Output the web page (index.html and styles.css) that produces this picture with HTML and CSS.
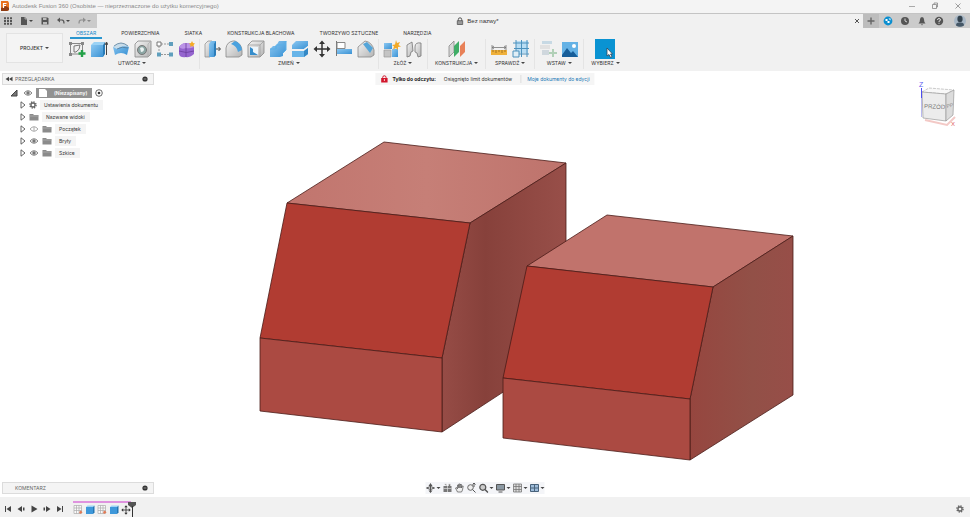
FILE: index.html
```html
<!DOCTYPE html>
<html lang="pl">
<head>
<meta charset="utf-8">
<title>Autodesk Fusion 360</title>
<link rel="stylesheet" href="styles.css">
</head>
<body>
<svg class="defs" aria-hidden="true">
  <defs>
    <linearGradient id="blue" x1="0" y1="0" x2="1" y2="1"><stop offset="0" stop-color="#8cc8f2"/><stop offset="1" stop-color="#3a92d4"/></linearGradient>
    <linearGradient id="gray" x1="0" y1="0" x2="1" y2="1"><stop offset="0" stop-color="#f4f4f4"/><stop offset="1" stop-color="#b4b4b4"/></linearGradient>
  </defs>
  <symbol id="eye" viewBox="0 0 10 8"><path d="M1 4Q5-.6 9 4Q5 8.600 1 4Z" fill="#eee" stroke="#888"/><circle cx="5" cy="4" r="1.700" fill="#777"/></symbol>
  <symbol id="eye-off" viewBox="0 0 10 8"><path d="M1 4Q5-.6 9 4Q5 8.600 1 4Z" fill="none" stroke="#aaa"/><path d="M5 2v4" stroke="#aaa"/></symbol>
  <symbol id="folder" viewBox="0 0 10 8"><path d="M.5 1h3.500l1 1h4.500v5.500h-9Z" fill="#8b8b8b"/><path d="M.5 3h9" stroke="#b5b5b5" stroke-width=".7"/></symbol>
  <symbol id="twisty" viewBox="0 0 6 8"><path d="M1 .8L5 4L1 7.200Z" fill="#fff" stroke="#555" stroke-width=".9"/></symbol>
  <symbol id="gear" viewBox="0 0 10 10"><circle cx="5" cy="5" r="3.800" fill="none" stroke="#666" stroke-width="1.800" stroke-dasharray="1.700 1.280"/><circle cx="5" cy="5" r="2.500" fill="none" stroke="#666" stroke-width="1.600"/></symbol>
  <symbol id="dot" viewBox="0 0 6 6"><circle cx="3" cy="3" r="2.600" fill="#333"/><path d="M1.600 3h2.800" stroke="#ccc" stroke-width=".6"/></symbol>
  <symbol id="tl-sketch" viewBox="0 0 10 10"><path d="M1 .5h7.500v8H1ZM1 3h7.500M1 5.500h7.500M3.500.5v8M6 .5v8" fill="#fafafa" stroke="#aaa" stroke-width=".7"/><path d="M6 7l2-1.500 1.500 2-2.500 1.500Z" fill="#e37a55"/></symbol>
  <symbol id="tl-box" viewBox="0 0 10 10"><path d="M1 2l1.500-1.500h7L8 2Z" fill="#9ed3f6"/><path d="M1 2h7v7H1Z" fill="#3e98da"/><path d="M8 2L9.500.5v7L8 9Z" fill="#2376b3"/></symbol>
  <symbol id="move" viewBox="0 0 18 18"><path d="M9 3v12M3 9h12" stroke="#333" stroke-width="1.500"/><path d="M9 .5l3 3.500H6ZM9 17.500l3-3.500H6ZM.5 9L4 6v6ZM17.500 9L14 6v6Z" fill="#333"/></symbol>
</svg>

<header class="titlebar">
  <svg class="logo" viewBox="0 0 10 12"><path d="M1 1h7l1 2v7l-2 1H1Z" fill="#e8701c"/><path d="M1 8l5-2 3 2v2l-2 1H1Z" fill="#8e3b12"/><path d="M3.500 3v5M3.500 3.500h3M3.500 5.500h2.500" stroke="#fff" stroke-width="1.200"/></svg>
  <h1>Autodesk Fusion 360 (Osobiste — nieprzeznaczone do użytku komercyjnego)</h1>
  <div class="window-controls">
    <button aria-label="Minimalizuj"><svg viewBox="0 0 8 8"><path d="M1 4.500h6" stroke="#888" stroke-width=".7"/></svg></button>
    <button aria-label="Przywróć"><svg viewBox="0 0 8 8"><path d="M1.500 2.500h4v4h-4ZM3 2.500V1h3.500v4h-1" fill="none" stroke="#777" stroke-width=".7"/></svg></button>
    <button aria-label="Zamknij"><svg viewBox="0 0 8 8"><path d="M1.500 1.500l5 5M6.500 1.500l-5 5" stroke="#777" stroke-width=".7"/></svg></button>
  </div>
</header>

<div class="docbar">
  <div class="quick">
    <button aria-label="Panel danych"><svg viewBox="0 0 8 8"><path d="M0 1.200h8M0 4h8M0 6.800h8" stroke="#555" stroke-width="1.900" stroke-dasharray="2 1"/></svg></button>
    <button class="menu" aria-label="Plik"><svg viewBox="0 0 8 8"><path d="M1 0h4l2 2v6H1Z" fill="#555"/><path d="M5 0v2h2" stroke="#ccc" stroke-width=".7" fill="none"/></svg></button>
    <button aria-label="Zapisz"><svg viewBox="0 0 8 8"><path d="M.5.5h6l1 1v6h-7Z" fill="#555"/><path d="M2 1h3.500v2H2ZM2 5h4v2.500H2Z" fill="#bbb"/></svg></button>
    <button class="menu" aria-label="Cofnij"><svg viewBox="0 0 8 8"><path d="M1.500 3H5q2 0 2 3.500" fill="none" stroke="#555" stroke-width="1.200"/><path d="M0 3l3-2.500v5Z" fill="#555"/></svg></button>
    <button class="menu faded" aria-label="Ponów"><svg viewBox="0 0 8 8"><path d="M6.500 3H3Q1 3 1 6.500" fill="none" stroke="#555" stroke-width="1.200"/><path d="M8 3L5 .5v5Z" fill="#555"/></svg></button>
  </div>
  <div class="doc-tab">
    <svg class="lock" viewBox="0 0 8 8"><path d="M2.300 4V2.500Q2.300.8 4 .8T5.700 2.500V4" fill="none" stroke="#555"/><path d="M1.300 3.700h5.400v3.800H1.300Z" fill="#999" stroke="#555" stroke-width=".8"/></svg>
    <span>Bez nazwy*</span>
    <button class="close" aria-label="Zamknij kartę"><svg viewBox="0 0 8 8"><path d="M2 2l4 4M6 2L2 6" stroke="#555"/></svg></button>
  </div>
  <div class="account">
    <button class="new" aria-label="Nowy projekt"><svg viewBox="0 0 10 10"><path d="M5 1.500v7M1.500 5h7" stroke="#666" stroke-width="1.400"/></svg></button>
    <button aria-label="Rozszerzenia"><svg viewBox="0 0 10 10"><circle cx="5" cy="5" r="4.400" fill="#0b8fd0"/><path d="M2.500 3h2v2h2v2h-2V5h-2ZM5.500 2.500h2v2" fill="#fff"/></svg></button>
    <button aria-label="Stan zadań"><svg viewBox="0 0 10 10"><circle cx="5" cy="5" r="4" fill="#555"/><path d="M5 2.500V5l2 1" fill="none" stroke="#d4d4d4"/></svg></button>
    <button aria-label="Powiadomienia"><svg viewBox="0 0 10 10"><path d="M1.500 7.500Q3 6 3 3.500Q3 1 5 1T7 3.500Q7 6 8.500 7.500Z" fill="#555"/><path d="M4 8.300h2L5 9.500Z" fill="#555"/></svg></button>
    <button aria-label="Pomoc"><svg viewBox="0 0 10 10"><circle cx="5" cy="5" r="4.200" fill="#555"/><path d="M3.500 4Q3.500 2.500 5 2.500T6.500 4Q6.500 4.800 5 5.200V6M5 6.800v1" fill="none" stroke="#ddd"/></svg></button>
    <button class="avatar" aria-label="Profil"><svg viewBox="0 0 12 12"><circle cx="6" cy="6" r="6" fill="#a9b8c6"/><ellipse cx="6" cy="4" rx="2.600" ry="3.300" fill="#34434f"/><path d="M2 10.500Q2 7.500 5 7.500h2q3 0 3 3Q6 13 2 10.500Z" fill="#455767"/></svg></button>
  </div>
</div>

<div class="ribbon">
  <button class="project caret">PROJEKT</button>
  <div class="tools">
    <nav class="tabs">
      <button class="active">OBSZAR</button><button>POWIERZCHNIA</button><button>SIATKA</button><button>KONSTRUKCJA BLACHOWA</button><button>TWORZYWO SZTUCZNE</button><button>NARZĘDZIA</button>
    </nav>
    <div class="groups">
      <section class="group">
        <div class="icons">
          <button aria-label="Szkic"><svg viewBox="0 0 18 18"><path d="M2.500 3v11h10M2.500 3.500h12v8" fill="none" stroke="#888"/><path d="M6 12V6l6-1q0 5-4 7Z" fill="none" stroke="#777"/><path d="M1 2h3v3H1ZM13 2h3v3h-3ZM1 13h3v3H1Z" fill="#888"/><path d="M14 10v7M10.500 13.500h7" stroke="#24a148" stroke-width="2.400"/></svg></button>
          <button aria-label="Wyciągnięcie"><svg viewBox="0 0 18 18"><path d="M1 5l3-3h11l-2 3Z" fill="#9bd2f5"/><path d="M1 5h12v12H1Z" fill="url(#blue)"/><path d="M13 5l2-3v12l-2 3Z" fill="#287cb8"/><path d="M16.500 3v12M15 5l1.500-3L18 5" stroke="#444" fill="none"/></svg></button>
          <button aria-label="Obrót"><svg viewBox="0 0 18 18"><path d="M1 7Q9 0 17 7l-2 8q-6-4-12 0Z" fill="url(#blue)"/><path d="M1 7Q9 0 17 7q-8-2-12 2Z" fill="#c8dce9"/><path d="M2 6Q9 0 16 6M5 9q5-3 11-1" fill="none" stroke="#577c98" stroke-width=".8"/></svg></button>
          <button aria-label="Otwór"><svg viewBox="0 0 18 18"><path d="M1 4l3-3h13v13l-3 3H1Z" fill="url(#gray)" stroke="#888" stroke-width=".8"/><path d="M14 17V4l3-3" fill="none" stroke="#aaa" stroke-width=".7"/><circle cx="8" cy="10" r="4.500" fill="#8ca6a4" stroke="#777"/><path d="M6 8q3-2 4 1 0 3-3 3Z" fill="#eaf2f2"/></svg></button>
          <button aria-label="Szyk"><svg viewBox="0 0 18 18"><path d="M5 4h8M5 14.500h8M3 6v6" stroke="#999" stroke-dasharray="2 1"/><path d="M1 2h4v4H1Z" fill="#fff" stroke="#777"/><path d="M13 2h4v4h-4ZM1 12.500h4v4H1ZM13 12.500h4v4h-4Z" fill="#5f9fbd"/></svg></button>
          <button aria-label="Utwórz formę"><svg viewBox="0 0 18 18"><path d="M1 7q3-4 7-4 6 0 8 4v7q-5 4-8 3-6 1-7-3Z" fill="#9565cf"/><path d="M1 7q3-4 7-4v5q-4 2-7-1ZM8 3q6 0 8 4-4 2-8 1Z" fill="#bb93e7"/><path d="M8 3v14M1 11q7 3 15 0" fill="none" stroke="#6a3c9c" stroke-width=".8"/><path d="M14 1l1 2 2 .5-1.500 1.500.5 2-2-1-2 1 .5-2L11 3.500l2-.5Z" fill="#f5ab24"/></svg></button>
        </div>
        <button class="group-name caret">UTWÓRZ</button>
      </section>
      <section class="group">
        <div class="icons">
          <button aria-label="Naciśnij i przeciągnij"><svg viewBox="0 0 18 18"><path d="M2 4l3-3h4v14l-2 2H2Z" fill="url(#gray)" stroke="#888" stroke-width=".7"/><path d="M6 4l2-3h5v14l-2 2H6Z" fill="url(#blue)"/><path d="M11 4l2-3v14l-2 2Z" fill="#2b7dba"/><path d="M13 9h4M15.500 7l2 2-2 2" fill="none" stroke="#444"/></svg></button>
          <button aria-label="Zaokrąglenie"><svg viewBox="0 0 18 18"><path d="M1 17V8q1-6 7-7h2q7 3 7 10v4l-3 2Z" fill="url(#gray)" stroke="#888" stroke-width=".8"/><path d="M6 4l4-3q6 2 7 9l-4 2q-1-6-7-8Z" fill="#4aa2df"/></svg></button>
          <button aria-label="Skorupa"><svg viewBox="0 0 18 18"><path d="M1 5l4-4h12v12l-4 4H1Z" fill="url(#gray)" stroke="#888" stroke-width=".8"/><path d="M1 5h12l4-4M13 5v12" fill="none" stroke="#999" stroke-width=".7"/><path d="M3 7h8v8H3Z" fill="#edf6fc"/><path d="M3 7l3 2v3l5 3H3Z" fill="#358dcc"/></svg></button>
          <button aria-label="Połącz"><svg viewBox="0 0 18 18"><path d="M1 9l3-3h3l3-5h7v9l-3 3v3l-3 1H1Z" fill="url(#blue)"/><path d="M1 9h6V5h8M15 5l2-4v9l-3 3M7 9v-3" fill="none" stroke="#5baee6"/></svg></button>
          <button aria-label="Podziel"><svg viewBox="0 0 18 18"><path d="M1 5l4-4h12v5l-4 3H1Z" fill="url(#blue)"/><path d="M1 9h12l4-3v2l-4 3H1Z" fill="#f1f1f1"/><path d="M1 11h12l4-3v6l-4 3H1Z" fill="#67b4e8"/><path d="M13 11l4-3v6l-4 3Z" fill="#3488c5"/></svg></button>
          <button aria-label="Przesuń"><svg><use href="#move"/></svg></button>
          <button aria-label="Wyrównaj"><svg viewBox="0 0 18 18"><path d="M1.500 1v15" stroke="#777"/><path d="M2 2.500h8v6H2Z" fill="#fff" stroke="#888"/><path d="M2 9h15v5H2Z" fill="url(#blue)"/></svg></button>
          <button aria-label="Usuń"><svg viewBox="0 0 18 18"><path d="M1 17V7l7-6q7 1 9 9v5l-3 2Z" fill="url(#gray)" stroke="#888" stroke-width=".8"/><path d="M6 4l4-2 6 6-3 5Z" fill="#54a5d9"/></svg></button>
        </div>
        <button class="group-name caret">ZMIEŃ</button>
      </section>
      <section class="group">
        <div class="icons">
          <button aria-label="Nowy komponent"><svg viewBox="0 0 18 18"><path d="M1 3h8v6H1Z" fill="url(#blue)"/><path d="M1 10h7v7H1Z" fill="#c4c4c4" stroke="#999" stroke-width=".7"/><path d="M9 9h6v8H9Z" fill="url(#blue)"/><path d="M13 0l1 3 3-1-1.500 3 2.500 1.500-3 .5v3l-2-2-3 1.500 1-3L9 5l3-.5Z" fill="#f2aa28"/></svg></button>
          <button aria-label="Połączenie"><svg viewBox="0 0 18 18"><path d="M2 5l5-3 1 9-2 1-1 4-3 1Z" fill="url(#gray)" stroke="#777" stroke-width=".8"/><path d="M10 7q0-5 6-4v13l-3 1-1-4-2-1Z" fill="url(#gray)" stroke="#777" stroke-width=".8"/></svg></button>
        </div>
        <button class="group-name caret">ZŁÓŻ</button>
      </section>
      <section class="group">
        <div class="icons">
          <button aria-label="Płaszczyzna konstrukcyjna"><svg viewBox="0 0 18 18"><path d="M1 6l5-5v11l-5 5Z" fill="#d8d8d8" stroke="#888" stroke-width=".8"/><path d="M6 6l5-5v11l-5 5Z" fill="#40ad67"/><path d="M12 6l5-5v11l-5 5Z" fill="#e88158"/></svg></button>
        </div>
        <button class="group-name caret">KONSTRUKCJA</button>
      </section>
      <section class="group">
        <div class="icons">
          <button aria-label="Zmierz"><svg viewBox="0 0 18 18"><path d="M2 5v5M16 5v5M2 7.500h14M4 6L2 7.500 4 9M14 6l2 1.500L14 9" fill="none" stroke="#777" stroke-width=".8"/><path d="M1 10h16v5H1Z" fill="#efb03a"/><path d="M3 10v2M6 10v3M9 10v2M12 10v3M15 10v2" stroke="#865d16" stroke-width=".7"/></svg></button>
          <button aria-label="Analiza"><svg viewBox="0 0 18 18"><path d="M4 1h12v12H4Z" fill="#b9ddf3"/><path d="M1 3h16M1 14h16M4 0v17M15 0v17M9.500 0v17M2 8.500h15" stroke="#4c91bd"/><path d="M1 11h6v6H1Z" fill="#e0eef6" stroke="#4c91bd"/></svg></button>
        </div>
        <button class="group-name caret">SPRAWDŹ</button>
      </section>
      <section class="group">
        <div class="icons">
          <button class="faded" aria-label="Wstaw pochodny"><svg viewBox="0 0 18 18"><path d="M3 1h10v3H3Z" fill="#9fc3d9"/><path d="M1 5h10v4H1Z" fill="#d2d2d2"/><path d="M3 10h7v5H3Z" fill="#aebfca"/><path d="M14 9v8M10 13h8" stroke="#72b17e" stroke-width="2"/></svg></button>
          <button aria-label="Wstaw obraz"><svg viewBox="0 0 18 18"><path d="M1 2h16v15H1Z" fill="#65b2e5"/><path d="M1 15l5-7 4 5 2-2 5 6H1Z" fill="#185e99"/><circle cx="13" cy="6" r="2" fill="#fff"/></svg></button>
        </div>
        <button class="group-name caret">WSTAW</button>
      </section>
      <section class="group">
        <div class="icons">
          <button class="select" aria-label="Wybierz"><svg viewBox="0 0 20 20"><path d="M0 0h20v20H0Z" fill="#0a93d2"/><path d="M12 9v8l2-1.500 1.500 3 1.500-1-1.500-2.500h2Z" fill="#fff" stroke="#345" stroke-width=".8"/></svg></button>
        </div>
        <button class="group-name caret">WYBIERZ</button>
      </section>
    </div>
  </div>
</div>

<main class="workspace">
  <svg class="model" viewBox="0 71 970 426" role="img" aria-label="Dwie bryły">
    <defs>
      <linearGradient id="top-a"><stop offset="0" stop-color="#c1756e"/><stop offset=".5" stop-color="#c67f77"/><stop offset="1" stop-color="#be736c"/></linearGradient>
      <linearGradient id="side-a"><stop offset="0" stop-color="#964c46"/><stop offset=".35" stop-color="#87413b"/><stop offset="1" stop-color="#984f49"/></linearGradient>
      <linearGradient id="side-b"><stop offset="0" stop-color="#96463f"/><stop offset=".6" stop-color="#925047"/><stop offset="1" stop-color="#974e48"/></linearGradient>
    </defs>
    <g stroke="#4a1c18" stroke-width=".8" stroke-linejoin="round">
      <path d="M384 142L566 163L470 223L287 203Z" fill="url(#top-a)"/>
      <path d="M470 223L566 163V351L442 432V358Z" fill="url(#side-a)"/>
      <path d="M287 203L470 223L442 358L260 338Z" fill="#b13c32"/>
      <path d="M260 338L442 358V432L260 411Z" fill="#ab4a42"/>
      <path d="M607 215L793 236L713 287L527 266Z" fill="#c1736c"/>
      <path d="M713 287L793 236V395L690 460V399Z" fill="url(#side-b)"/>
      <path d="M527 266L713 287L690 399L503 378Z" fill="#b13c32"/>
      <path d="M503 378L690 399V460L503 438Z" fill="#ab4a42"/>
    </g>
  </svg>

  <aside class="browser">
    <div class="panel-head">
      <svg class="rewind" viewBox="0 0 8 6"><path d="M4 .8v4.400L.5 3ZM7.500.8v4.400L4 3Z" fill="#444"/></svg>
      <h2>PRZEGLĄDARKA</h2>
      <button aria-label="Opcje przeglądarki"><svg><use href="#dot"/></svg></button>
    </div>
    <ul class="tree">
      <li class="root">
        <svg class="twisty" viewBox="0 0 8 8"><path d="M7 1v6H1Z" fill="#777" stroke="#444"/></svg>
        <svg class="eye"><use href="#eye"/></svg>
        <span class="selected"><svg class="folder" viewBox="0 0 10 8"><path d="M1 0h6l2 2v6H1Z" fill="#fff"/></svg>(Niezapisany)</span>
        <svg class="target" viewBox="0 0 8 8"><circle cx="4" cy="4" r="3.300" fill="#fff" stroke="#444" stroke-width=".8"/><circle cx="4" cy="4" r="1.300" fill="#333"/></svg>
      </li>
      <li><svg class="twisty"><use href="#twisty"/></svg><svg class="cog"><use href="#gear"/></svg><span>Ustawienia dokumentu</span></li>
      <li><svg class="twisty"><use href="#twisty"/></svg><svg class="folder"><use href="#folder"/></svg><span>Nazwane widoki</span></li>
      <li><svg class="twisty"><use href="#twisty"/></svg><svg class="eye"><use href="#eye-off"/></svg><svg class="folder"><use href="#folder"/></svg><span>Początek</span></li>
      <li><svg class="twisty"><use href="#twisty"/></svg><svg class="eye"><use href="#eye"/></svg><svg class="folder"><use href="#folder"/></svg><span>Bryły</span></li>
      <li><svg class="twisty"><use href="#twisty"/></svg><svg class="eye"><use href="#eye"/></svg><svg class="folder"><use href="#folder"/></svg><span>Szkice</span></li>
    </ul>
  </aside>

  <div class="notice">
    <svg viewBox="0 0 8 8"><path d="M2.300 3.500V2.500Q2.300.8 4 .8T5.700 2.500v1" fill="none" stroke="#d2162c"/><path d="M.8 3h6.400v4.500H.8Z" fill="#d2162c"/><path d="M4 4v2" stroke="#fff" stroke-width=".8"/></svg>
    <strong>Tylko do odczytu:</strong>
    <span>Osiągnięto limit dokumentów</span>
    <a href="#">Moje dokumenty do edycji</a>
  </div>

  <svg class="viewcube" viewBox="0 0 44 50" role="img" aria-label="Kostka widoku">
    <path d="M10 40l22 5 8-8" fill="none" stroke="#f3c9c6" stroke-width="2"/>
    <path d="M7 12L14 8L39 10L31 14Z" fill="#f8f8f8" stroke="#aaa" stroke-width=".6" stroke-dasharray="3 1"/>
    <path d="M7 12L31 14V41L8 38Z" fill="#ececec" stroke="#999" stroke-width=".7"/>
    <path d="M31 14L39 10L38 35L31 41Z" fill="#dcdcdc" stroke="#999" stroke-width=".7"/>
    <path d="M6.500 8v10" stroke="#4d4df0"/>
    <path d="M6.500 18v19" stroke="#9c9ce8" stroke-width=".7"/>
    <text x="4" y="7" class="axis-z">Z</text>
    <text x="36" y="46" class="axis-x">X</text>
    <text x="9" y="28" class="face" transform="rotate(3 9 28)">PRZÓD</text>
    <text x="32" y="28" class="face-side" transform="rotate(-12 32 28)">PP</text>
  </svg>

  <div class="comments panel-head">
    <h2>KOMENTARZ</h2>
    <button aria-label="Opcje komentarzy"><svg><use href="#dot"/></svg></button>
  </div>

  <div class="navbar">
    <button class="menu" aria-label="Orbita"><svg viewBox="0 0 10 10"><path d="M5 1v8M1 5q4-3 8 0-4 3-8 0" fill="none" stroke="#555"/><path d="M5 0l2 3H3ZM5 10l2-2.500H3Z" fill="#555"/></svg></button>
    <button aria-label="Patrz na"><svg viewBox="0 0 10 10"><path d="M1 3h8v6H1Z" fill="#777"/><path d="M1 5.500h8M5 3v6M2 1h2v2M6 3V1h2v2" stroke="#ddd" stroke-width=".7" fill="#777"/></svg></button>
    <button aria-label="Przesuń widok"><svg viewBox="0 0 10 10"><path d="M3 9L1 5l1-.5L3 6V2h1.300v3V1h1.300v4V1.500H7V5l.5-2h1.200L8 7 7 9Z" fill="#eee" stroke="#555" stroke-width=".7"/></svg></button>
    <button aria-label="Powiększ"><svg viewBox="0 0 10 10"><circle cx="4" cy="4.500" r="2.800" fill="#eee" stroke="#666"/><path d="M6 6.500L9 9.500M7.500 4V0M6 1.500L7.500 0 9 1.500" fill="none" stroke="#555"/></svg></button>
    <button class="menu" aria-label="Dopasuj"><svg viewBox="0 0 10 10"><circle cx="4.300" cy="4.300" r="3" fill="#ccc" stroke="#555" stroke-width="1.200"/><path d="M6.500 6.500l3 3" stroke="#555" stroke-width="1.500"/></svg></button>
    <button class="menu" aria-label="Ustawienia wyświetlania"><svg viewBox="0 0 10 10"><path d="M1 1.500h8v5.500H1Z" fill="#8b98a2" stroke="#555"/><path d="M3 9h4" stroke="#555"/></svg></button>
    <button class="menu" aria-label="Siatka i przyciąganie"><svg viewBox="0 0 10 10"><path d="M1 1h8v8H1ZM1 3.500h8M1 6.500h8M3.500 1v8M6.500 1v8" fill="#ddd" stroke="#777" stroke-width=".8"/></svg></button>
    <button class="menu" aria-label="Rzutnie"><svg viewBox="0 0 10 10"><path d="M1 1.500h8v7H1Z" fill="#9ebcda" stroke="#49637b"/><path d="M1 5h8M5 1.500v7" stroke="#49637b"/></svg></button>
  </div>
</main>

<footer class="timeline">
  <div class="playback">
    <button aria-label="Początek"><svg viewBox="0 0 8 8"><path d="M1.500 1v6" stroke="#444"/><path d="M7 1v6L2.500 4Z" fill="#444"/></svg></button>
    <button aria-label="Krok wstecz"><svg viewBox="0 0 8 8"><path d="M5 1v6L.5 4ZM6 2.500h1.500v3H6Z" fill="#444"/></svg></button>
    <button aria-label="Odtwórz"><svg viewBox="0 0 8 8"><path d="M1.500.5v7L7.500 4Z" fill="#444"/></svg></button>
    <button aria-label="Krok naprzód"><svg viewBox="0 0 8 8"><path d="M3 1v6l4.500-3ZM.5 2.500H2v3H.5Z" fill="#444"/></svg></button>
    <button aria-label="Koniec"><svg viewBox="0 0 8 8"><path d="M6.500 1v6" stroke="#444"/><path d="M1 1v6l4.500-3Z" fill="#444"/></svg></button>
  </div>
  <div class="history">
    <button aria-label="Szkic 1"><svg><use href="#tl-sketch"/></svg></button>
    <button aria-label="Wyciągnięcie 1"><svg><use href="#tl-box"/></svg></button>
    <button aria-label="Szkic 2"><svg><use href="#tl-sketch"/></svg></button>
    <button aria-label="Wyciągnięcie 2"><svg><use href="#tl-box"/></svg></button>
    <button aria-label="Przesunięcie"><svg><use href="#move"/></svg></button>
    <svg class="marker" viewBox="0 0 8 17"><path d="M0 1h8v3L4 7 0 4Z" fill="#555"/><path d="M4.500 5v12" stroke="#333"/></svg>
  </div>
  <button class="settings" aria-label="Ustawienia osi czasu"><svg><use href="#gear"/></svg></button>
</footer>
</body>
</html>
```
FILE: styles.css
```css
* { box-sizing: border-box; }

body {
  margin: 0;
  height: 100vh;
  display: flex;
  flex-direction: column;
  overflow: hidden;
  background: #fff;
  color: #333;
  font: 5px/8px Inter, "Liberation Sans", sans-serif;
}

button {
  display: flex;
  align-items: center;
  justify-content: center;
  margin: 0;
  padding: 0;
  border: 0;
  background: none;
  color: inherit;
  font: inherit;
}

svg { display: block; flex: none; }
h1, h2 { margin: 0; font: inherit; }
.defs { position: absolute; width: 0; height: 0; }
.faded { opacity: .5; }

.caret::after,
.menu::after {
  content: "";
  margin-left: 2px;
  border: 2px solid transparent;
  border-top-color: #444;
  border-bottom: 0;
}
.menu::after { margin-left: 1px; }

/* Title bar */
.titlebar {
  display: flex;
  align-items: center;
  height: 14px;
  padding: 0 8px 2px 0;
  border-bottom: 1px solid #c4c4c4;
  background: #f4f4f4;
}
.titlebar h1 { flex: 1; color: #8a8a8a; font: 6px/8px "Liberation Sans", sans-serif; }
.logo { width: 10px; height: 12px; margin-right: 2px; }
.window-controls { display: flex; gap: 15px; }
.window-controls svg { width: 8px; height: 8px; }

/* Document bar */
.docbar { display: flex; height: 14px; background: #f1f1f1; }
.quick { display: flex; align-items: center; gap: 8px; width: 97px; padding-left: 4px; background: #cbcbcb; }
.quick svg { width: 8px; height: 8px; }
.doc-tab {
  position: relative;
  flex: 1;
  display: flex;
  align-items: center;
  justify-content: center;
  gap: 3px;
  padding-right: 5px;
  font: 6px/8px "Liberation Sans", sans-serif;
}
.lock { width: 8px; height: 8px; }
.close { position: absolute; right: 2px; }
.close svg { width: 8px; height: 8px; }
.account { display: flex; align-items: center; gap: 7px; padding-right: 4px; background: #cbcbcb; }
.account svg { width: 10px; height: 10px; }
.account .new { width: 16px; height: 14px; margin-right: -3px; background: #bdbdbd; }
.account .avatar { margin-left: 3px; }
.account .avatar svg { width: 12px; height: 12px; }

/* Ribbon */
.ribbon { display: flex; height: 43px; background: #f1f1f1; }
.project { width: 57px; margin: 5px 2px 8px 6px; border: 1px solid #e3e3e3; background: #f4f4f4; font-weight: 500; }
.tools { display: flex; flex-direction: column; }
.tabs { display: flex; gap: 13px; height: 11px; padding: 1px 0 0 5px; }
.tabs button { padding: 0 6px; border-bottom: 2px solid transparent; }
.tabs .active { border-bottom-color: #2a96cf; color: #1587c8; }
.groups { display: flex; }
.group {
  display: flex;
  flex-direction: column;
  align-items: center;
  min-width: 49px;
  height: 30px;
  border-right: 1px solid #e4e4e4;
}
.group:last-child { min-width: 0; border-right: 0; }
.icons { display: flex; align-items: center; gap: 4px; height: 20px; padding: 0 3px; }
.icons svg { width: 18px; height: 18px; }
.icons .select svg { width: 20px; height: 20px; }
.group-name { height: 8px; padding: 0 7px; }

/* Viewport */
.workspace { position: relative; flex: 1; min-height: 0; }
.model { width: 100%; height: 100%; }

.panel-head {
  display: flex;
  align-items: center;
  height: 12px;
  padding: 0 5px 0 2px;
  border: 1px solid #dcdcdc;
  background: #f4f4f4;
  color: #666;
}
.panel-head h2 { flex: 1; }
.panel-head button svg { width: 6px; height: 6px; }
.rewind { width: 8px; height: 6px; margin-right: 2px; }

.browser { position: absolute; top: 2px; left: 2px; width: 152px; }
.tree { margin: 2px 0 0; padding: 0; list-style: none; }
.tree li { display: flex; align-items: center; gap: 3px; height: 12px; padding-left: 18px; }
.tree .root { padding-left: 8px; }
.tree li span { padding: 1px 5px 1px 4px; background: #f4f4f4; }
.tree .selected { display: flex; gap: 6px; padding-left: 2px; background: #929292; color: #fff; font-weight: 600; }
.twisty { width: 6px; height: 8px; }
.root .twisty { width: 8px; height: 8px; }
.root .eye { margin-left: 2px; }
.eye, .folder { width: 10px; height: 8px; }
.cog, .target { width: 8px; height: 8px; }

.notice {
  position: absolute;
  top: 2px;
  left: 50%;
  transform: translateX(-50%);
  display: flex;
  align-items: center;
  gap: 8px;
  height: 12px;
  padding: 0 5px;
  background: #f5f5f5;
  white-space: nowrap;
}
.notice svg { width: 8px; height: 8px; }
.notice strong { margin-left: -4px; color: #222; }
.notice a { padding-left: 6px; border-left: 1px solid #ddd; color: #1577b5; text-decoration: none; }

.viewcube { position: absolute; top: 9px; right: 11px; width: 44px; height: 50px; }
.viewcube text { font-family: "Liberation Sans", sans-serif; }
.axis-z { fill: #6060f0; font-size: 7px; }
.axis-x { fill: #e0605c; font-size: 6px; }
.face { fill: #777; font-size: 6px; }
.face-side { fill: #888; font-size: 5px; }

.comments { position: absolute; bottom: 3px; left: 2px; width: 152px; padding-left: 12px; }
.navbar {
  position: absolute;
  bottom: 3px;
  left: 50%;
  transform: translateX(-50%);
  display: flex;
  align-items: center;
  gap: 2px;
  height: 12px;
  background: #f4f5f8;
}
.navbar svg { width: 10px; height: 10px; }

/* Timeline */
.timeline { display: flex; align-items: center; height: 20px; padding: 0 6px 0 4px; background: #f1f1f1; }
.playback { display: flex; gap: 5px; margin-top: 4px; }
.playback svg { width: 8px; height: 8px; }
.history { position: relative; display: flex; gap: 2px; margin: 2px auto 0 9px; padding-top: 2px; border-top: 2px solid #df93df; }
.history svg { width: 10px; height: 10px; }
.history .marker { position: absolute; top: -2px; right: -5px; width: 8px; height: 17px; }
.settings { margin-top: 4px; }
.settings svg { width: 8px; height: 8px; }
```
